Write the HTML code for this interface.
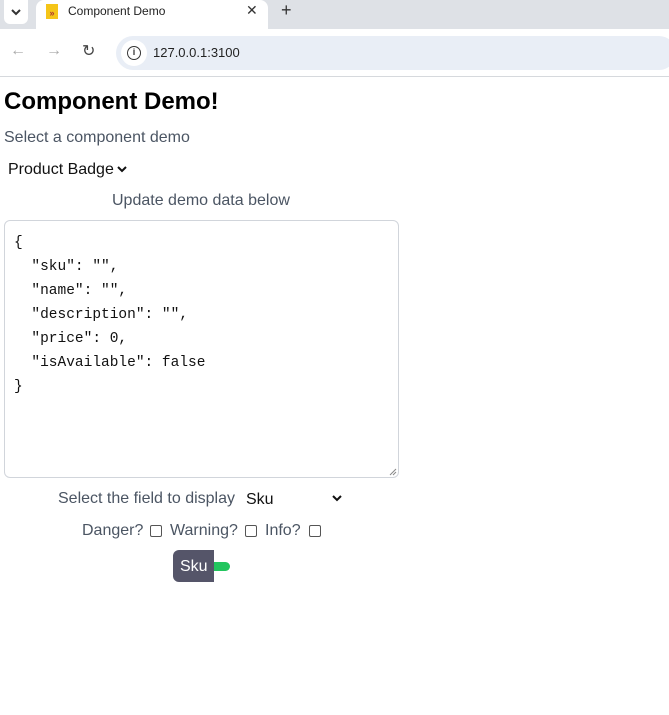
<!DOCTYPE html>
<html><head><style>
*{box-sizing:border-box;margin:0;padding:0}
body{width:669px;height:715px;overflow:hidden;background:#fff;font-family:"Liberation Sans",sans-serif;position:relative}
.abs{position:absolute;white-space:nowrap}
.g{color:#4b5563;font-size:16px}
</style></head><body>
<div class="abs" style="left:0;top:0;width:669px;height:29px;background:#dee1e6"></div>
<div class="abs" style="left:4px;top:0;width:24px;height:24px;background:#fff;border-radius:0 0 6px 6px"></div>
<svg class="abs" style="left:10px;top:7px" width="12" height="10"><path d="M2 3l4 4 4-4" stroke="#333" stroke-width="2" fill="none"/></svg>
<div class="abs" style="left:36px;top:0;width:232px;height:29px;background:#fff;border-radius:8px 8px 0 0"></div>
<div class="abs" style="left:46px;top:4px;width:12px;height:15px;background:#f5c518;color:#a33;font-size:9px;font-weight:bold;line-height:18px;text-align:center">»</div>
<div class="abs" style="left:68px;top:4px;font-size:12px;color:#222">Component Demo</div>
<div class="abs" style="left:246px;top:2px;font-size:14px;color:#333">✕</div>
<div class="abs" style="left:281px;top:0px;font-size:18px;color:#333">+</div>
<div class="abs" style="left:0;top:29px;width:669px;height:47px;background:#fff"></div>
<div class="abs" style="left:10px;top:42px;font-size:16px;color:#aaa">←</div>
<div class="abs" style="left:46px;top:42px;font-size:16px;color:#aaa">→</div>
<div class="abs" style="left:82px;top:41px;font-size:16px;color:#444">↻</div>
<div class="abs" style="left:116px;top:36px;width:560px;height:34px;background:#e9eef6;border-radius:17px"></div>
<div class="abs" style="left:121px;top:40px;width:26px;height:26px;background:#fff;border-radius:13px"></div>
<div class="abs" style="left:127px;top:46px;width:14px;height:14px;border:1.6px solid #333;border-radius:7px;font-size:9px;font-weight:bold;text-align:center;line-height:11px;color:#333">i</div>
<div class="abs" style="left:153px;top:45px;font-size:13px;color:#222">127.0.0.1:3100</div>
<div class="abs" style="left:0;top:76px;width:669px;height:1px;background:#d6d9dd"></div>

<div class="abs" style="left:4px;top:88px;font-size:24px;font-weight:bold;color:#000">Component Demo!</div>
<div class="abs g" style="left:4px;top:129px">Select a component demo</div>
<div class="abs" style="left:8px;top:161px;font-size:16px;color:#111">Product Badge</div>
<svg class="abs" style="left:117px;top:165px" width="10" height="8"><path d="M1 2l4 4 4-4" stroke="#111" stroke-width="2" fill="none"/></svg>
<div class="abs g" style="left:112px;top:192px">Update demo data below</div>
<div class="abs" style="left:4px;top:220px;width:395px;height:258px;border:1px solid #d1d5db;border-radius:6px"></div>
<pre class="abs" style="white-space:pre;left:14px;top:231px;font-family:'Liberation Mono',monospace;font-size:14.5px;line-height:24px;color:#111">{
  "sku": "",
  "name": "",
  "description": "",
  "price": 0,
  "isAvailable": false
}</pre>
<svg class="abs" style="left:389px;top:468px" width="8" height="8"><path d="M7 1L1 7M7 4L4 7" stroke="#888" stroke-width="1"/></svg>
<div class="abs g" style="left:58px;top:490px">Select the field to display</div>
<div class="abs" style="left:246px;top:491px;font-size:16px;color:#111">Sku</div>
<svg class="abs" style="left:332px;top:494px" width="10" height="8"><path d="M1 2l4 4 4-4" stroke="#111" stroke-width="2" fill="none"/></svg>
<div class="abs g" style="left:82px;top:522px">Danger?</div>
<div class="abs" style="left:150px;top:525px;width:12px;height:12px;border:1.5px solid #555;border-radius:2px"></div>
<div class="abs g" style="left:170px;top:522px">Warning?</div>
<div class="abs" style="left:245px;top:525px;width:12px;height:12px;border:1.5px solid #555;border-radius:2px"></div>
<div class="abs g" style="left:265px;top:522px">Info?</div>
<div class="abs" style="left:309px;top:525px;width:12px;height:12px;border:1.5px solid #555;border-radius:2px"></div>
<div class="abs" style="left:208px;top:562px;width:22px;height:9px;background:#22c55e;border-radius:5px"></div>
<div class="abs" style="left:173px;top:550px;width:41px;height:32px;background:#555569;border-radius:6px 0 0 6px;color:#fff;font-size:16px;line-height:33px;padding-left:7px">Sku</div>
</body></html>
